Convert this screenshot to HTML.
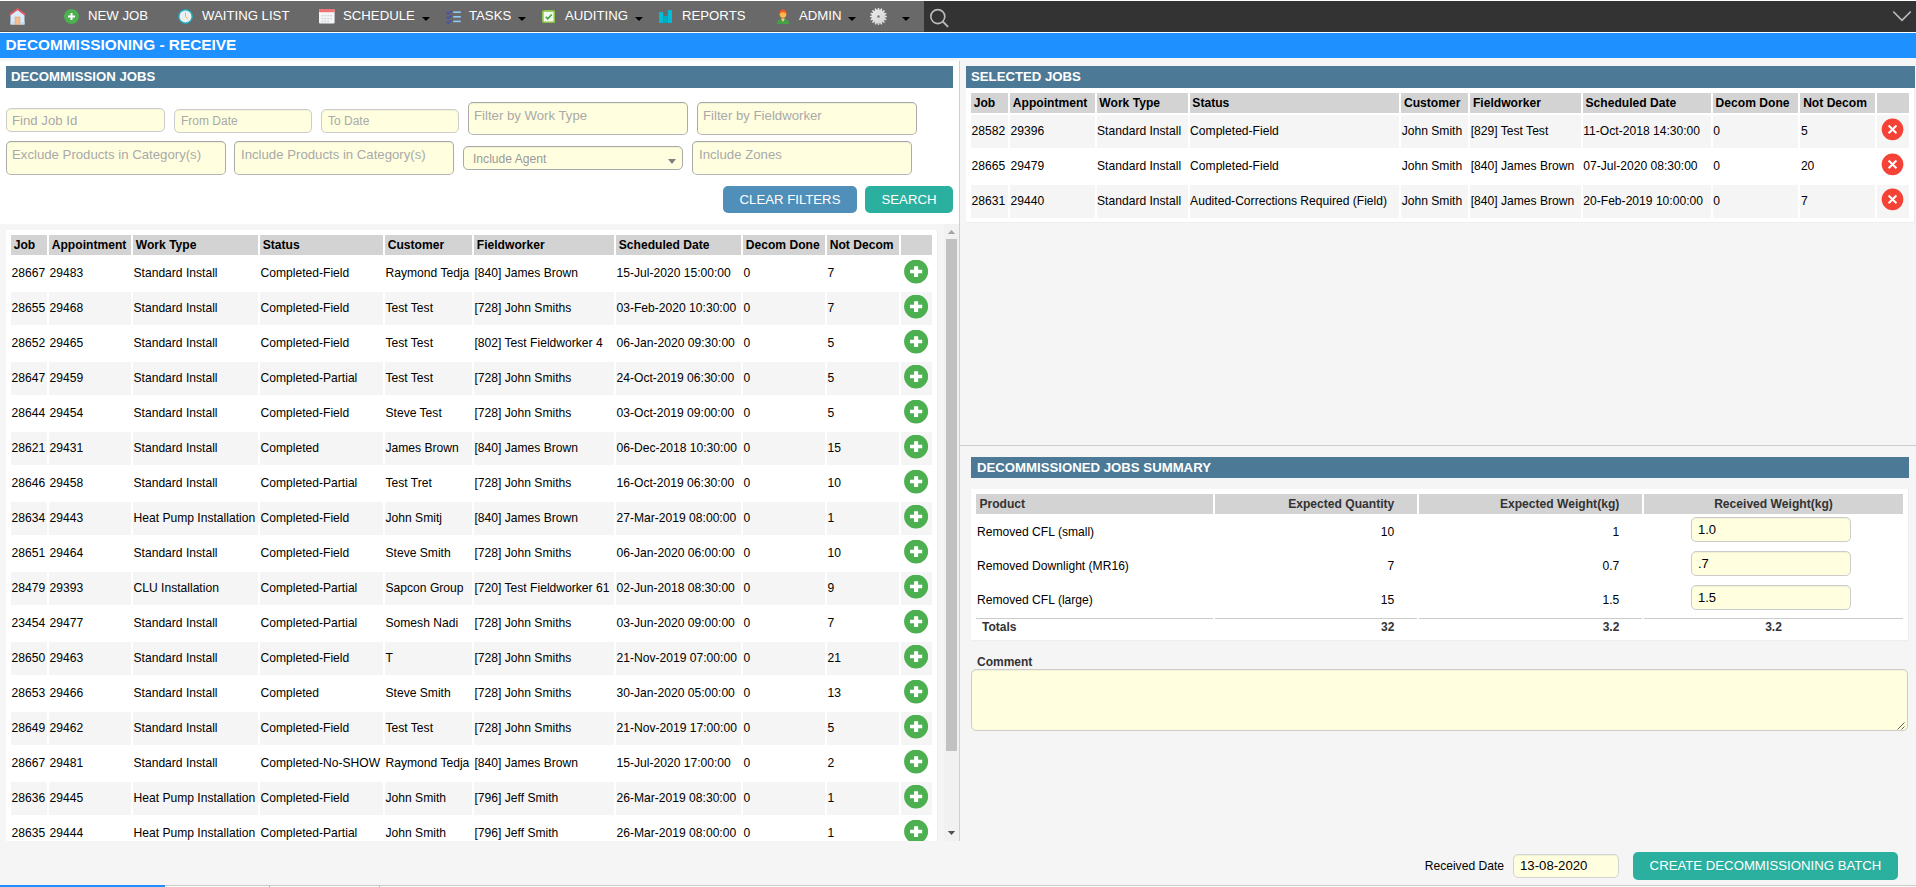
<!DOCTYPE html>
<html>
<head>
<meta charset="utf-8">
<title>Decommissioning - Receive</title>
<style>
*{box-sizing:border-box;}
html,body{margin:0;padding:0;}
body{width:1916px;height:887px;overflow:hidden;background:#f5f5f5;font-family:"Liberation Sans",sans-serif;font-size:12.1px;color:#000;position:relative;}
.abs{position:absolute;}
/* nav */
#topline{left:0;top:0;width:1916px;height:1px;background:#fff;}
#nav{left:0;top:1px;width:1916px;height:31px;background:#696969;border-bottom:1px solid #555;}
#navdark{left:924px;top:1px;width:992px;height:31px;background:#333;}
#navline{left:0;top:32px;width:1916px;height:1px;background:#fff;}
.nt{position:absolute;top:1px;height:30px;line-height:30px;font-size:13.2px;color:#fff;white-space:nowrap;}
.caret{position:absolute;top:17px;width:0;height:0;border-left:4px solid transparent;border-right:4px solid transparent;border-top:4px solid #000;}
.nic{position:absolute;}
#title{left:0;top:33px;width:1916px;height:25px;background:#1e90ff;color:#fff;font-weight:bold;font-size:15.4px;line-height:23px;padding-left:5.5px;}
/* left */
#lpanel{left:0;top:61px;width:959px;height:163px;background:#fff;}
#divider{left:959px;top:61px;width:1px;height:780px;background:#cfcfcf;}
.hdr{position:absolute;height:22px;background:#4c7a96;color:#fff;font-weight:bold;font-size:13.2px;line-height:22px;padding-left:5px;white-space:nowrap;}
.inp{position:absolute;background:#ffffe0;border:1px solid #ccc;border-radius:5px;font-size:13.2px;color:#a9a9a9;padding-left:5px;padding-top:1px;white-space:nowrap;overflow:hidden;box-shadow:inset 0 1px 1px rgba(0,0,0,0.06);}
.btn{position:absolute;border-radius:5px;color:#fff;font-size:13.2px;text-align:center;white-space:nowrap;}
#lscroll{left:0;top:224px;width:959px;height:617px;overflow:hidden;}
#ltpanel{left:6px;top:6px;width:932px;height:700px;background:#fff;border-right:1px solid #eee;}
#sbtrack{left:944px;top:224px;width:15px;height:617px;background:#f1f1f1;}
#sbthumb{left:946px;top:239px;width:11px;height:512px;background:#c1c1c1;}
table.grid{border-collapse:separate;border-spacing:2px;table-layout:fixed;font-size:12.1px;margin:0;}
table.grid th{background:#d3d3d3;font-weight:bold;font-size:12.1px;text-align:left;padding:3px 3px 3px 2.75px;height:20px;line-height:14px;white-space:nowrap;overflow:hidden;}
table.grid td{padding:0 0 2px 0.5px;height:33px;white-space:nowrap;overflow:hidden;vertical-align:middle;}
table.grid tr.alt td{background:#f5f5f5;}
table.grid td.ico{text-align:center;vertical-align:top;padding:3px 0 0 0;}
table.grid .ic{display:block;margin:0;position:relative;left:3px;}
table.lt{position:absolute;left:3px;top:3px;width:925px;}
table.rt td.ico{padding-top:2px;}
table.rt .ic{left:4px;}
/* right */
#rpanel{left:966px;top:66px;width:949px;height:157px;background:#fff;border-right:1px solid #eee;border-bottom:1px solid #eee;}
table.rt{position:absolute;left:3px;top:25px;width:942px;}
#hline{left:960px;top:445px;width:956px;height:1px;background:#ccc;}
#spanel{left:971px;top:489px;width:938px;height:152px;background:#fff;border-right:1px solid #eee;border-bottom:1px solid #eee;}
table.sum{position:absolute;left:3px;top:3px;border-collapse:separate;border-spacing:2px;table-layout:fixed;font-size:12.1px;color:#000;}
table.sum th{background:#d3d3d3;color:#333;font-weight:bold;font-size:12.1px;height:20px;padding:3px;line-height:14px;white-space:nowrap;}
table.sum td{height:32px;padding:0 1px;white-space:nowrap;vertical-align:middle;}
table.sum .r{text-align:right;padding-right:22.7px;}
table.sum .c{text-align:center;}
table.sum tr.tot td{height:17px;border-top:1px solid #ccc;font-weight:bold;font-size:12px;color:#333;line-height:14px;vertical-align:middle;}
.sinp{display:inline-block;width:160px;height:25px;background:#ffffe0;border:1px solid #ccc;border-radius:5px;font-size:13px;line-height:24px;text-align:left;padding-left:6.5px;vertical-align:middle;color:#000;box-shadow:inset 0 1px 1px rgba(0,0,0,0.06);position:relative;left:-3px;top:-3px;}
#bline{left:0;top:885px;width:1916px;height:1px;background:#ccc;}
#bblue{left:0;top:885px;width:165px;height:2px;background:#1e90ff;}
#bwhite{left:165px;top:886px;width:1751px;height:1px;background:#fcfcfc;}
</style>
</head>
<body>
<div class="abs" id="topline"></div>
<div class="abs" id="nav"></div>
<div class="abs" id="navdark"></div>
<div class="abs" id="navline"></div>

<!-- nav icons -->
<svg class="nic" style="left:9px;top:8px" width="17" height="17" viewBox="0 0 17 17">
  <rect x="1.5" y="6" width="14" height="10.5" fill="#d6ebfb"/>
  <rect x="1.5" y="14" width="14" height="2.5" fill="#c3e0f8"/>
  <path d="M1.5 6.4L8.5 1.4l7 5z" fill="#d6ebfb"/>
  <path d="M0.5 6.9L8.5 1.1l8 5.8" stroke="#e0595f" stroke-width="1.8" fill="none"/>
  <rect x="6" y="9" width="5" height="7.5" fill="#f7bb8d" stroke="#e49a66" stroke-width="0.5"/>
</svg>
<svg class="nic" style="left:64px;top:9px" width="15" height="15" viewBox="0 0 15 15"><circle cx="7.5" cy="7.5" r="7.5" fill="#4caf50"/><path d="M6.5 4h2v2.5H11v2H8.5V11h-2V8.5H4v-2h2.5z" fill="#fff"/></svg>
<div class="nt" style="left:88px">NEW JOB</div>
<svg class="nic" style="left:178px;top:9px" width="15" height="15" viewBox="0 0 15 15"><circle cx="7.5" cy="7.5" r="7.4" fill="#1fa9b8"/><circle cx="7.5" cy="7.5" r="6" fill="#eceff1"/><path d="M7.5 3.5v4l2.2 2.3" stroke="#e8b93a" stroke-width="1" fill="none"/></svg>
<div class="nt" style="left:202px">WAITING LIST</div>
<svg class="nic" style="left:319.3px;top:9.3px" width="15.6" height="14.6" viewBox="0 0 16 15"><rect x="0" y="0" width="16" height="15" rx="1" fill="#f7f7f7"/><rect x="0" y="0" width="16" height="3.3" rx="1" fill="#ef7478"/><g fill="#cfd6dc"><rect x="2.5" y="6" width="2" height="1.6"/><rect x="5.5" y="6" width="2" height="1.6"/><rect x="8.5" y="6" width="2" height="1.6"/><rect x="11.5" y="6" width="2" height="1.6"/><rect x="2.5" y="9" width="2" height="1.6"/><rect x="5.5" y="9" width="2" height="1.6"/><rect x="8.5" y="9" width="2" height="1.6"/><rect x="11.5" y="9" width="2" height="1.6"/><rect x="2.5" y="12" width="2" height="1.6"/><rect x="5.5" y="12" width="2" height="1.6"/><rect x="8.5" y="12" width="2" height="1.6"/></g></svg>
<div class="nt" style="left:343px">SCHEDULE</div>
<div class="caret" style="left:422px"></div>
<svg class="nic" style="left:445.7px;top:9.5px" width="15" height="14" viewBox="0 0 15 14"><g stroke="#3f51b5" stroke-width="1.4" fill="none"><path d="M0.6 2.2l1.7 1.6L5.4 0.8"/><path d="M0.6 6.8l1.7 1.6L5.4 5.4"/><path d="M0.6 11.4l1.7 1.6L5.4 10"/></g><g fill="#90caf9"><rect x="7.2" y="1.4" width="7.6" height="1.6"/><rect x="7.2" y="6" width="7.6" height="1.6"/><rect x="7.2" y="10.6" width="7.6" height="1.6"/></g></svg>
<div class="nt" style="left:469px">TASKS</div>
<div class="caret" style="left:518px"></div>
<svg class="nic" style="left:542px;top:10px" width="13.2" height="13.2" viewBox="0 0 14 14"><rect x="0" y="0" width="14" height="14" rx="2.2" fill="#8bc34a"/><rect x="1.8" y="1.8" width="10.4" height="10.4" rx="0.8" fill="#f3f8ec"/><path d="M3.9 7.2l2.2 2.2 4.2-4.6" stroke="#43a047" stroke-width="1.7" fill="none"/></svg>
<div class="nt" style="left:565px">AUDITING</div>
<div class="caret" style="left:635px"></div>
<svg class="nic" style="left:659px;top:10px" width="13.2" height="13" viewBox="0 0 13.2 13"><rect x="0" y="2" width="4.3" height="11" fill="#00bcd4"/><rect x="4.6" y="6" width="4" height="7" fill="#00acc1"/><rect x="8.9" y="0" width="4.3" height="13" fill="#00bcd4"/></svg>
<div class="nt" style="left:682px">REPORTS</div>
<svg class="nic" style="left:776px;top:9px" width="14" height="15" viewBox="0 0 14 15"><path d="M0.8 15c0-3.5 2.6-5 6.2-5s6.2 1.5 6.2 5z" fill="#43a047"/><path d="M5 9.5h4L7 13z" fill="#ffcc80"/><circle cx="7" cy="5.6" r="3.3" fill="#ffb74d"/><path d="M3.5 5.2C3.2 2 5 0.5 7 0.5s3.8 1.5 3.5 4.7C9.5 3.8 8.6 3.2 7 3.2S4.5 3.8 3.5 5.2z" fill="#ff5722"/></svg>
<div class="nt" style="left:799px">ADMIN</div>
<div class="caret" style="left:848px"></div>
<svg class="nic" style="left:870px;top:8px" width="17" height="17" viewBox="0 0 17 17"><defs><linearGradient id="gg" x1="0" y1="0" x2="1" y2="1"><stop offset="0" stop-color="#efefef"/><stop offset="1" stop-color="#cfcfcf"/></linearGradient></defs><path d="M7.27 2.32L7.93 -0.08L9.07 -0.08L9.73 2.32L9.73 2.32L11.25 0.35L12.31 0.79L12.00 3.26L12.00 3.26L14.16 2.03L14.97 2.84L13.74 5.00L13.74 5.00L16.21 4.69L16.65 5.75L14.68 7.27L14.68 7.27L17.08 7.93L17.08 9.07L14.68 9.73L14.68 9.73L16.65 11.25L16.21 12.31L13.74 12.00L13.74 12.00L14.97 14.16L14.16 14.97L12.00 13.74L12.00 13.74L12.31 16.21L11.25 16.65L9.73 14.68L9.73 14.68L9.07 17.08L7.93 17.08L7.27 14.68L7.27 14.68L5.75 16.65L4.69 16.21L5.00 13.74L5.00 13.74L2.84 14.97L2.03 14.16L3.26 12.00L3.26 12.00L0.79 12.31L0.35 11.25L2.32 9.73L2.32 9.73L-0.08 9.07L-0.08 7.93L2.32 7.27L2.32 7.27L0.35 5.75L0.79 4.69L3.26 5.00L3.26 5.00L2.03 2.84L2.84 2.03L5.00 3.26L5.00 3.26L4.69 0.79L5.75 0.35L7.27 2.32z" fill="url(#gg)"/><circle cx="8.5" cy="8.5" r="1.3" fill="#7d7d7d"/></svg>
<div class="caret" style="left:902px"></div>
<svg class="nic" style="left:929px;top:7px" width="20" height="21" viewBox="0 0 20 21"><circle cx="8.8" cy="9.6" r="7" stroke="#b9bcbf" stroke-width="1.6" fill="none"/><path d="M13.9 14.7l4.7 4.7" stroke="#b9bcbf" stroke-width="1.9" fill="none" stroke-linecap="round"/></svg>
<svg class="nic" style="left:1892px;top:10px" width="20" height="12" viewBox="0 0 20 12"><path d="M1.7 2L10 10.4L18.3 2" stroke="#b9bdc1" stroke-width="1.7" fill="none" stroke-linecap="round"/></svg>

<div class="abs" id="title">DECOMMISSIONING - RECEIVE</div>

<!-- LEFT -->
<div class="abs" id="lpanel"></div>
<div class="hdr" style="left:6px;top:66px;width:947px;">DECOMMISSION JOBS</div>
<div class="inp" style="left:6px;top:108px;width:159px;height:24px;line-height:22px;">Find Job Id</div>
<div class="inp" style="left:174px;top:109px;width:138px;height:24px;line-height:21px;padding-left:6px;padding-top:1px;font-size:12px;">From Date</div>
<div class="inp" style="left:321px;top:109px;width:138px;height:24px;line-height:21px;padding-left:6px;padding-top:1px;font-size:12px;">To Date</div>
<div class="inp" style="left:468px;top:102px;width:220px;height:33px;line-height:24px;border-color:#a6a6a6 #ababab #b4b4b4 #ababab;">Filter by Work Type</div>
<div class="inp" style="left:697px;top:102px;width:220px;height:33px;line-height:24px;border-color:#a6a6a6 #ababab #b4b4b4 #ababab;">Filter by Fieldworker</div>
<div class="inp" style="left:6px;top:141px;width:220px;height:34px;line-height:24px;border-color:#a6a6a6 #ababab #b4b4b4 #ababab;">Exclude Products in Category(s)</div>
<div class="inp" style="left:234px;top:141px;width:220px;height:34px;line-height:24px;padding-left:6px;border-color:#a6a6a6 #ababab #b4b4b4 #ababab;">Include Products in Category(s)</div>
<div class="inp" style="left:463px;top:146px;width:220px;height:24px;line-height:22px;font-size:12.1px;padding-left:9px;color:#999;border-color:#aaa;">Include Agent<span style="position:absolute;right:6px;top:12px;width:0;height:0;border-left:4.5px solid transparent;border-right:4.5px solid transparent;border-top:5px solid #808080;"></span></div>
<div class="inp" style="left:692px;top:141px;width:220px;height:34px;line-height:24px;padding-left:6px;border-color:#a6a6a6 #ababab #b4b4b4 #ababab;">Include Zones</div>
<div class="btn" style="left:723px;top:186px;width:134px;height:27px;line-height:27px;background:#4f8fba;">CLEAR FILTERS</div>
<div class="btn" style="left:865px;top:186px;width:88px;height:27px;line-height:27px;background:#2bb0a0;">SEARCH</div>

<div class="abs" id="lscroll">
  <div class="abs" id="ltpanel">
<table class="grid lt">
<colgroup>
<col style="width:36px">
<col style="width:82px">
<col style="width:125px">
<col style="width:123px">
<col style="width:87px">
<col style="width:140px">
<col style="width:125px">
<col style="width:82px">
<col style="width:72px">
<col style="width:31px">
</colgroup>
<tr><th>Job</th><th>Appointment</th><th>Work Type</th><th>Status</th><th>Customer</th><th>Fieldworker</th><th>Scheduled Date</th><th>Decom Done</th><th>Not Decom</th><th></th></tr>
<tr><td>28667</td><td>29483</td><td>Standard Install</td><td>Completed-Field</td><td>Raymond Tedja</td><td>[840] James Brown</td><td>15-Jul-2020 15:00:00</td><td>0</td><td>7</td><td class="ico"><svg class="ic" width="25" height="25" viewBox="0 0 25 25"><g transform="translate(0.1 -0.45)"><circle cx="12" cy="12" r="12" fill="#4caf50"/><path d="M9.95 6.6h4.1v3.65h4.05v3.5h-4.05v3.65h-4.1v-3.65H5.9v-3.5h4.05z" fill="#fff"/></g></svg></td></tr>
<tr class="alt"><td>28655</td><td>29468</td><td>Standard Install</td><td>Completed-Field</td><td>Test Test</td><td>[728] John Smiths</td><td>03-Feb-2020 10:30:00</td><td>0</td><td>7</td><td class="ico"><svg class="ic" width="25" height="25" viewBox="0 0 25 25"><g transform="translate(0.1 -0.45)"><circle cx="12" cy="12" r="12" fill="#4caf50"/><path d="M9.95 6.6h4.1v3.65h4.05v3.5h-4.05v3.65h-4.1v-3.65H5.9v-3.5h4.05z" fill="#fff"/></g></svg></td></tr>
<tr><td>28652</td><td>29465</td><td>Standard Install</td><td>Completed-Field</td><td>Test Test</td><td>[802] Test Fieldworker 4</td><td>06-Jan-2020 09:30:00</td><td>0</td><td>5</td><td class="ico"><svg class="ic" width="25" height="25" viewBox="0 0 25 25"><g transform="translate(0.1 -0.45)"><circle cx="12" cy="12" r="12" fill="#4caf50"/><path d="M9.95 6.6h4.1v3.65h4.05v3.5h-4.05v3.65h-4.1v-3.65H5.9v-3.5h4.05z" fill="#fff"/></g></svg></td></tr>
<tr class="alt"><td>28647</td><td>29459</td><td>Standard Install</td><td>Completed-Partial</td><td>Test Test</td><td>[728] John Smiths</td><td>24-Oct-2019 06:30:00</td><td>0</td><td>5</td><td class="ico"><svg class="ic" width="25" height="25" viewBox="0 0 25 25"><g transform="translate(0.1 -0.45)"><circle cx="12" cy="12" r="12" fill="#4caf50"/><path d="M9.95 6.6h4.1v3.65h4.05v3.5h-4.05v3.65h-4.1v-3.65H5.9v-3.5h4.05z" fill="#fff"/></g></svg></td></tr>
<tr><td>28644</td><td>29454</td><td>Standard Install</td><td>Completed-Field</td><td>Steve Test</td><td>[728] John Smiths</td><td>03-Oct-2019 09:00:00</td><td>0</td><td>5</td><td class="ico"><svg class="ic" width="25" height="25" viewBox="0 0 25 25"><g transform="translate(0.1 -0.45)"><circle cx="12" cy="12" r="12" fill="#4caf50"/><path d="M9.95 6.6h4.1v3.65h4.05v3.5h-4.05v3.65h-4.1v-3.65H5.9v-3.5h4.05z" fill="#fff"/></g></svg></td></tr>
<tr class="alt"><td>28621</td><td>29431</td><td>Standard Install</td><td>Completed</td><td>James Brown</td><td>[840] James Brown</td><td>06-Dec-2018 10:30:00</td><td>0</td><td>15</td><td class="ico"><svg class="ic" width="25" height="25" viewBox="0 0 25 25"><g transform="translate(0.1 -0.45)"><circle cx="12" cy="12" r="12" fill="#4caf50"/><path d="M9.95 6.6h4.1v3.65h4.05v3.5h-4.05v3.65h-4.1v-3.65H5.9v-3.5h4.05z" fill="#fff"/></g></svg></td></tr>
<tr><td>28646</td><td>29458</td><td>Standard Install</td><td>Completed-Partial</td><td>Test Tret</td><td>[728] John Smiths</td><td>16-Oct-2019 06:30:00</td><td>0</td><td>10</td><td class="ico"><svg class="ic" width="25" height="25" viewBox="0 0 25 25"><g transform="translate(0.1 -0.45)"><circle cx="12" cy="12" r="12" fill="#4caf50"/><path d="M9.95 6.6h4.1v3.65h4.05v3.5h-4.05v3.65h-4.1v-3.65H5.9v-3.5h4.05z" fill="#fff"/></g></svg></td></tr>
<tr class="alt"><td>28634</td><td>29443</td><td>Heat Pump Installation</td><td>Completed-Field</td><td>John Smitj</td><td>[840] James Brown</td><td>27-Mar-2019 08:00:00</td><td>0</td><td>1</td><td class="ico"><svg class="ic" width="25" height="25" viewBox="0 0 25 25"><g transform="translate(0.1 -0.45)"><circle cx="12" cy="12" r="12" fill="#4caf50"/><path d="M9.95 6.6h4.1v3.65h4.05v3.5h-4.05v3.65h-4.1v-3.65H5.9v-3.5h4.05z" fill="#fff"/></g></svg></td></tr>
<tr><td>28651</td><td>29464</td><td>Standard Install</td><td>Completed-Field</td><td>Steve Smith</td><td>[728] John Smiths</td><td>06-Jan-2020 06:00:00</td><td>0</td><td>10</td><td class="ico"><svg class="ic" width="25" height="25" viewBox="0 0 25 25"><g transform="translate(0.1 -0.45)"><circle cx="12" cy="12" r="12" fill="#4caf50"/><path d="M9.95 6.6h4.1v3.65h4.05v3.5h-4.05v3.65h-4.1v-3.65H5.9v-3.5h4.05z" fill="#fff"/></g></svg></td></tr>
<tr class="alt"><td>28479</td><td>29393</td><td>CLU Installation</td><td>Completed-Partial</td><td>Sapcon Group</td><td>[720] Test Fieldworker 61</td><td>02-Jun-2018 08:30:00</td><td>0</td><td>9</td><td class="ico"><svg class="ic" width="25" height="25" viewBox="0 0 25 25"><g transform="translate(0.1 -0.45)"><circle cx="12" cy="12" r="12" fill="#4caf50"/><path d="M9.95 6.6h4.1v3.65h4.05v3.5h-4.05v3.65h-4.1v-3.65H5.9v-3.5h4.05z" fill="#fff"/></g></svg></td></tr>
<tr><td>23454</td><td>29477</td><td>Standard Install</td><td>Completed-Partial</td><td>Somesh Nadi</td><td>[728] John Smiths</td><td>03-Jun-2020 09:00:00</td><td>0</td><td>7</td><td class="ico"><svg class="ic" width="25" height="25" viewBox="0 0 25 25"><g transform="translate(0.1 -0.45)"><circle cx="12" cy="12" r="12" fill="#4caf50"/><path d="M9.95 6.6h4.1v3.65h4.05v3.5h-4.05v3.65h-4.1v-3.65H5.9v-3.5h4.05z" fill="#fff"/></g></svg></td></tr>
<tr class="alt"><td>28650</td><td>29463</td><td>Standard Install</td><td>Completed-Field</td><td>T</td><td>[728] John Smiths</td><td>21-Nov-2019 07:00:00</td><td>0</td><td>21</td><td class="ico"><svg class="ic" width="25" height="25" viewBox="0 0 25 25"><g transform="translate(0.1 -0.45)"><circle cx="12" cy="12" r="12" fill="#4caf50"/><path d="M9.95 6.6h4.1v3.65h4.05v3.5h-4.05v3.65h-4.1v-3.65H5.9v-3.5h4.05z" fill="#fff"/></g></svg></td></tr>
<tr><td>28653</td><td>29466</td><td>Standard Install</td><td>Completed</td><td>Steve Smith</td><td>[728] John Smiths</td><td>30-Jan-2020 05:00:00</td><td>0</td><td>13</td><td class="ico"><svg class="ic" width="25" height="25" viewBox="0 0 25 25"><g transform="translate(0.1 -0.45)"><circle cx="12" cy="12" r="12" fill="#4caf50"/><path d="M9.95 6.6h4.1v3.65h4.05v3.5h-4.05v3.65h-4.1v-3.65H5.9v-3.5h4.05z" fill="#fff"/></g></svg></td></tr>
<tr class="alt"><td>28649</td><td>29462</td><td>Standard Install</td><td>Completed-Field</td><td>Test Test</td><td>[728] John Smiths</td><td>21-Nov-2019 17:00:00</td><td>0</td><td>5</td><td class="ico"><svg class="ic" width="25" height="25" viewBox="0 0 25 25"><g transform="translate(0.1 -0.45)"><circle cx="12" cy="12" r="12" fill="#4caf50"/><path d="M9.95 6.6h4.1v3.65h4.05v3.5h-4.05v3.65h-4.1v-3.65H5.9v-3.5h4.05z" fill="#fff"/></g></svg></td></tr>
<tr><td>28667</td><td>29481</td><td>Standard Install</td><td>Completed-No-SHOW</td><td>Raymond Tedja</td><td>[840] James Brown</td><td>15-Jul-2020 17:00:00</td><td>0</td><td>2</td><td class="ico"><svg class="ic" width="25" height="25" viewBox="0 0 25 25"><g transform="translate(0.1 -0.45)"><circle cx="12" cy="12" r="12" fill="#4caf50"/><path d="M9.95 6.6h4.1v3.65h4.05v3.5h-4.05v3.65h-4.1v-3.65H5.9v-3.5h4.05z" fill="#fff"/></g></svg></td></tr>
<tr class="alt"><td>28636</td><td>29445</td><td>Heat Pump Installation</td><td>Completed-Field</td><td>John Smith</td><td>[796] Jeff Smith</td><td>26-Mar-2019 08:30:00</td><td>0</td><td>1</td><td class="ico"><svg class="ic" width="25" height="25" viewBox="0 0 25 25"><g transform="translate(0.1 -0.45)"><circle cx="12" cy="12" r="12" fill="#4caf50"/><path d="M9.95 6.6h4.1v3.65h4.05v3.5h-4.05v3.65h-4.1v-3.65H5.9v-3.5h4.05z" fill="#fff"/></g></svg></td></tr>
<tr><td>28635</td><td>29444</td><td>Heat Pump Installation</td><td>Completed-Partial</td><td>John Smith</td><td>[796] Jeff Smith</td><td>26-Mar-2019 08:00:00</td><td>0</td><td>1</td><td class="ico"><svg class="ic" width="25" height="25" viewBox="0 0 25 25"><g transform="translate(0.1 -0.45)"><circle cx="12" cy="12" r="12" fill="#4caf50"/><path d="M9.95 6.6h4.1v3.65h4.05v3.5h-4.05v3.65h-4.1v-3.65H5.9v-3.5h4.05z" fill="#fff"/></g></svg></td></tr>
</table>
  </div>
</div>
<div class="abs" id="sbtrack"></div>
<div class="abs" id="sbthumb"></div>
<svg class="abs" style="left:947px;top:229px" width="9" height="6" viewBox="0 0 9 6"><path d="M0.8 5L4.5 0.9L8.2 5z" fill="#a3a3a3"/></svg>
<svg class="abs" style="left:947px;top:830px" width="9" height="6" viewBox="0 0 9 6"><path d="M0.8 1L4.5 5.1L8.2 1z" fill="#505050"/></svg>
<div class="abs" id="divider"></div>

<!-- RIGHT -->
<div class="abs" id="rpanel">
<table class="grid rt">
<colgroup>
<col style="width:37px">
<col style="width:84.5px">
<col style="width:91px">
<col style="width:209.5px">
<col style="width:67px">
<col style="width:110.5px">
<col style="width:128px">
<col style="width:85.5px">
<col style="width:75px">
<col style="width:31.5px">
</colgroup>
<tr><th>Job</th><th>Appointment</th><th>Work Type</th><th>Status</th><th>Customer</th><th>Fieldworker</th><th>Scheduled Date</th><th>Decom Done</th><th>Not Decom</th><th></th></tr>
<tr class="alt"><td>28582</td><td>29396</td><td>Standard Install</td><td>Completed-Field</td><td>John Smith</td><td>[829] Test Test</td><td>11-Oct-2018 14:30:00</td><td>0</td><td>5</td><td class="ico"><svg class="ic" width="24" height="24" viewBox="0 0 24 24"><g transform="translate(-0.48 0.35)"><circle cx="12" cy="12" r="10.85" fill="#f44336"/><path d="M8.1 8.1l7.8 7.8M15.9 8.1l-7.8 7.8" stroke="#fff" stroke-width="1.95" fill="none"/></g></svg></td></tr>
<tr><td>28665</td><td>29479</td><td>Standard Install</td><td>Completed-Field</td><td>John Smith</td><td>[840] James Brown</td><td>07-Jul-2020 08:30:00</td><td>0</td><td>20</td><td class="ico"><svg class="ic" width="24" height="24" viewBox="0 0 24 24"><g transform="translate(-0.48 0.35)"><circle cx="12" cy="12" r="10.85" fill="#f44336"/><path d="M8.1 8.1l7.8 7.8M15.9 8.1l-7.8 7.8" stroke="#fff" stroke-width="1.95" fill="none"/></g></svg></td></tr>
<tr class="alt"><td>28631</td><td>29440</td><td>Standard Install</td><td>Audited-Corrections Required (Field)</td><td>John Smith</td><td>[840] James Brown</td><td>20-Feb-2019 10:00:00</td><td>0</td><td>7</td><td class="ico"><svg class="ic" width="24" height="24" viewBox="0 0 24 24"><g transform="translate(-0.48 0.35)"><circle cx="12" cy="12" r="10.85" fill="#f44336"/><path d="M8.1 8.1l7.8 7.8M15.9 8.1l-7.8 7.8" stroke="#fff" stroke-width="1.95" fill="none"/></g></svg></td></tr>
</table>
</div>
<div class="hdr" style="left:966px;top:66px;width:949px;">SELECTED JOBS</div>
<div class="abs" id="hline"></div>
<div class="hdr" style="left:971px;top:457px;width:938px;height:21px;line-height:22px;padding-left:6px;">DECOMMISSIONED JOBS SUMMARY</div>
<div class="abs" id="spanel">
<table class="sum">
<colgroup><col style="width:237px"><col style="width:202px"><col style="width:223px"><col style="width:259px"></colgroup>
<tr><th style="text-align:left;padding-left:3.4px">Product</th><th class="r">Expected Quantity</th><th class="r">Expected Weight(kg)</th><th class="c">Received Weight(kg)</th></tr>
<tr><td>Removed CFL (small)</td><td class="r">10</td><td class="r">1</td><td class="c"><span class="sinp">1.0</span></td></tr>
<tr><td>Removed Downlight (MR16)</td><td class="r">7</td><td class="r">0.7</td><td class="c"><span class="sinp">.7</span></td></tr>
<tr><td>Removed CFL (large)</td><td class="r">15</td><td class="r">1.5</td><td class="c"><span class="sinp">1.5</span></td></tr>
<tr class="tot"><td style="padding-left:6px">Totals</td><td class="r">32</td><td class="r">3.2</td><td class="c">3.2</td></tr>
</table>
</div>
<div class="abs" style="left:977px;top:655px;font-weight:bold;color:#333;font-size:12px;line-height:14px;">Comment</div>
<div class="abs" style="left:971px;top:669px;width:937px;height:62px;background:#ffffe0;border:1px solid #ccc;border-radius:5px;box-shadow:inset 0 1px 1px rgba(0,0,0,0.06);"></div>
<svg class="abs" style="left:1897px;top:721.5px" width="8" height="8" viewBox="0 0 8 8"><path d="M0.5 7.5L7.5 0.5M4.5 7.5L7.5 4.5" stroke="#555" stroke-width="0.9" fill="none"/></svg>

<div class="abs" style="left:1424.7px;top:859px;font-size:12.1px;line-height:14px;white-space:nowrap;">Received Date</div>
<div class="inp" style="left:1513px;top:854px;width:106px;height:23.5px;line-height:21px;color:#000;padding-left:6px;padding-top:0;border-color:#d4d4d4;">13-08-2020</div>
<div class="btn" style="left:1633px;top:852px;width:265px;height:28px;line-height:28px;background:#2bb0a0;">CREATE DECOMMISSIONING BATCH</div>

<div class="abs" id="bline"></div>
<div class="abs" id="bwhite"></div>
<div class="abs" id="bblue"></div>
<div class="abs" style="left:269px;top:886px;width:1px;height:1px;background:#f0a030;"></div>
<div class="abs" style="left:379px;top:886px;width:1px;height:1px;background:#f0a030;"></div>
</body>
</html>
